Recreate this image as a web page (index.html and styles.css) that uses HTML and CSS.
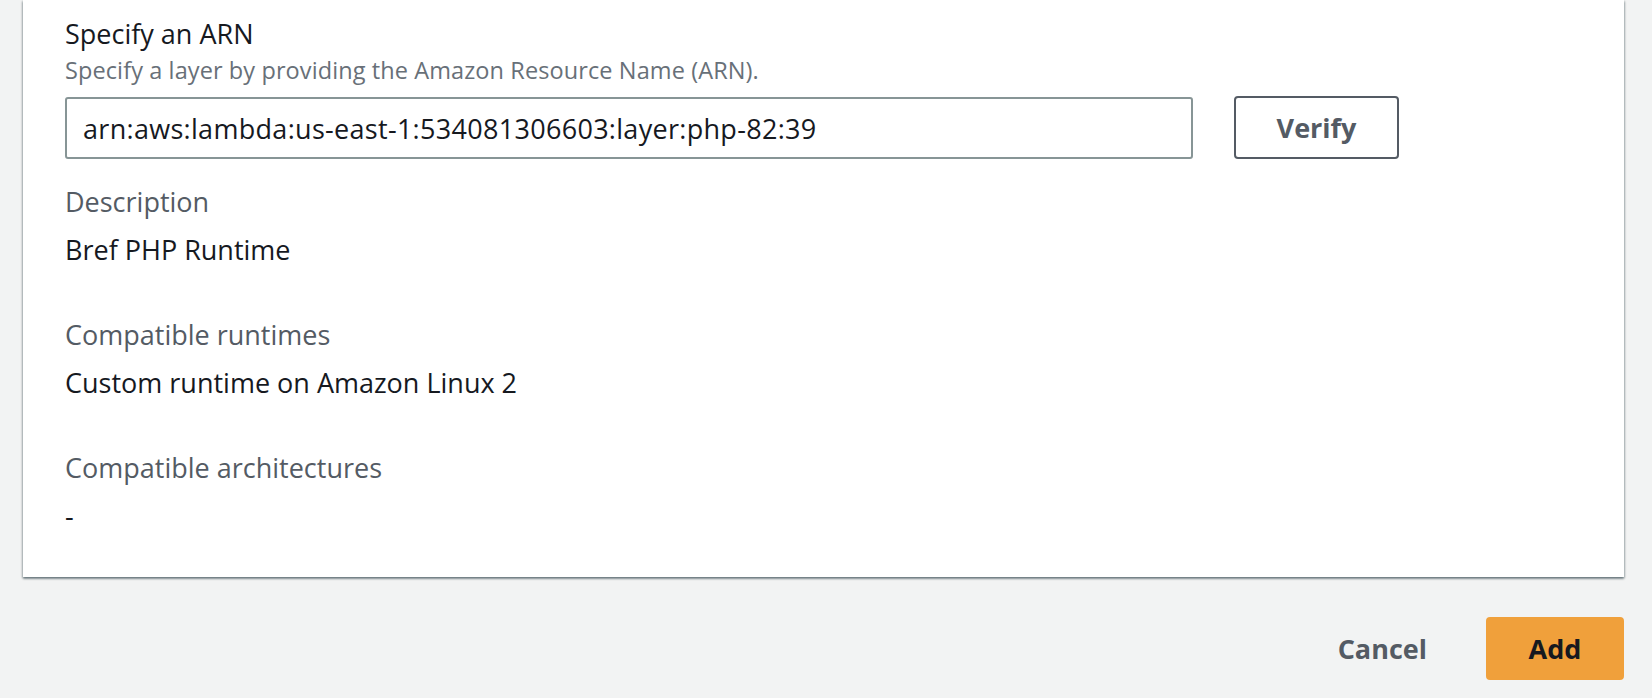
FILE: index.html
```html
<!DOCTYPE html>
<html lang="en">
<head>
<meta charset="utf-8">
<title>Add layer</title>
<link rel="stylesheet" href="styles.css">
</head>
<body>
  <div class="page">
    <section class="card">
      <div class="field">
        <div class="field-label">Specify an ARN</div>
        <div class="field-desc">Specify a layer by providing the Amazon Resource Name (ARN).</div>
        <div class="field-row">
          <input class="text-input" type="text" value="arn:aws:lambda:us-east-1:534081306603:layer:php-82:39">
          <button class="btn btn-normal" type="button">Verify</button>
        </div>
      </div>
      <div class="details">
        <div class="kv">
          <div class="kv-label">Description</div>
          <div class="kv-value">Bref PHP Runtime</div>
        </div>
        <div class="kv">
          <div class="kv-label">Compatible runtimes</div>
          <div class="kv-value">Custom runtime on Amazon Linux 2</div>
        </div>
        <div class="kv">
          <div class="kv-label">Compatible architectures</div>
          <div class="kv-value">-</div>
        </div>
      </div>
    </section>
    <div class="actions">
      <button class="btn btn-link" type="button">Cancel</button>
      <button class="btn btn-primary" type="button">Add</button>
    </div>
  </div>
</body>
</html>
```

FILE: styles.css
```css
html, body {
  margin: 0;
  padding: 0;
  background: #f2f3f3;
}

body {
  font-family: "Open Sans", "Noto Sans", sans-serif;
  color: #16191f;
  overflow: hidden;
}

.page {
  width: 1652px;
  height: 698px;
}

.card {
  margin: 0 28px 0 23px;
  padding: 16px 42px 41px 42px;
  background: #ffffff;
  box-shadow: 0 2px 2px rgba(0, 28, 36, 0.35),
              1px 1px 2px rgba(0, 28, 36, 0.22),
              -1px 1px 2px rgba(0, 28, 36, 0.22);
}

.field-label {
  font-size: 27px;
  line-height: 36px;
  color: #16191f;
}

.field-desc {
  font-size: 23.5px;
  line-height: 36px;
  letter-spacing: 0.1px;
  color: #687078;
}

.field-row {
  display: flex;
  align-items: flex-start;
  gap: 41px;
  margin-top: 9px;
}

.text-input {
  box-sizing: border-box;
  width: 1128px;
  height: 62px;
  margin: 0;
  padding: 0 16px;
  border: 2px solid #879596;
  border-radius: 3px;
  background: #ffffff;
  font-family: "Open Sans", "Noto Sans", sans-serif;
  font-size: 27px;
  letter-spacing: 0.3px;
  color: #16191f;
  outline: none;
}

.btn {
  box-sizing: border-box;
  height: 63px;
  margin: 0;
  padding: 0 41px;
  border: 2px solid transparent;
  border-radius: 4px;
  background: transparent;
  font-family: "Open Sans", "Noto Sans", sans-serif;
  font-size: 27px;
  font-weight: 700;
  line-height: 1;
  cursor: pointer;
}

.btn-normal {
  width: 165px;
  margin-top: -1px;
  padding: 0;
  border-color: #545b64;
  background: #ffffff;
  color: #545b64;
}

.details {
  margin-top: 23px;
}

.kv + .kv {
  margin-top: 45px;
}

.kv-label {
  font-size: 27px;
  line-height: 40px;
  color: #545b64;
}

.kv-value {
  margin-top: 8px;
  font-size: 27px;
  line-height: 40px;
  color: #16191f;
}

.actions {
  display: flex;
  justify-content: flex-end;
  align-items: center;
  gap: 16px;
  margin: 40px 28px 0 0;
}

.btn-link {
  color: #545b64;
}

.btn-primary {
  width: 138px;
  padding: 0;
  border-color: #f0a03b;
  background: #f0a03b;
  color: #16191f;
}
```
